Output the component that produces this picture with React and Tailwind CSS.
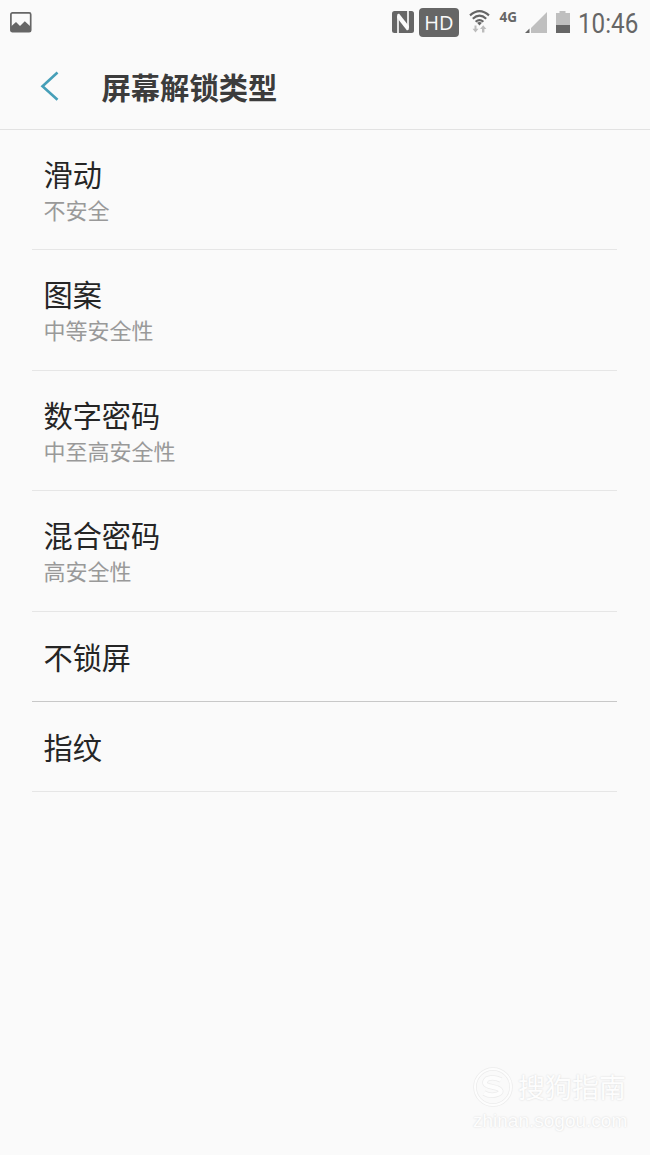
const lockTypes = [
  { title: '滑动', desc: '不安全' },
  { title: '图案', desc: '中等安全性' },
  { title: '数字密码', desc: '中至高安全性' },
  { title: '混合密码', desc: '高安全性' },
  { title: '不锁屏', strong: true },
  { title: '指纹' },
];

const StatusBar = () => (
  <div className="flex h-[46px] items-start justify-between pl-[10px] pr-[13px] text-[#666]">
    {/* Notification */}
    <svg className="mt-3 h-[21px] w-[22px]" viewBox="0 0 22 21" fill="none">
      <rect x="0.9" y="0.9" width="19.8" height="18.8" rx="1.5" stroke="currentColor" strokeWidth="1.7" />
      <path d="M1 14.500 6 10l4 4L14.800 9.200l6 5.500V20H1z" fill="currentColor" />
    </svg>

    <div className="flex items-start">
      {/* NFC */}
      <svg className="mt-[11px] h-[22px] w-[22px]" viewBox="0 0 22 22">
        <rect width="22" height="22" rx="2.5" fill="currentColor" />
        <path d="M6 22V5" stroke="#fafafa" strokeWidth="1.700" />
        <path d="M16 0V17" stroke="#fafafa" strokeWidth="1.700" />
        <path d="M5.200 3.500 7 2.500 16.800 15V18.500L15 19.500 5.200 7z" fill="#fafafa" />
      </svg>
      <span className="ml-[5px] mt-2 flex h-[29px] w-10 items-center justify-center rounded-[4px] bg-[#666] font-['Open_Sans',sans-serif] text-[20px] leading-none text-[#fafafa]">
        HD
      </span>
      {/* Wifi */}
      <svg className="ml-[10px] mt-[10px] h-[23px] w-[21px]" viewBox="0 0 21 23" fill="none">
        <g stroke="currentColor" strokeWidth="2.1">
          <path d="M1 5.400Q10.500-3 20 5.400" />
          <path d="M3.800 8.800Q10.500 2.600 17.200 8.800" />
          <path d="M6.600 11.800Q10.500 8.400 14.400 11.800" />
        </g>
        <path d="M8 12.800Q10.500 11 13 12.800L10.500 15.500z" fill="currentColor" />
        <path d="M5.500 15.500H7.500V18.800H9.500L6.500 22.500 3.500 18.800H5.500zM13 22.500V19H11L14.200 15.200 17.400 19H15.400V22.500z" fill="#bcbcbc" />
      </svg>
      <span className="ml-[9.5px] mt-[10px] w-[18.5px] font-['Open_Sans',sans-serif] text-[13.5px] font-bold leading-[14px]">
        4G
      </span>
      {/* Signal */}
      <svg className="ml-[7px] mt-[11px] h-[23px] w-[23px]" viewBox="0 0 23 23">
        <path d="M6 17 22 1V22H6z" fill="#bfbfbf" />
        <path d="M0 22 4.500 17.500V22z" fill="currentColor" />
      </svg>
      {/* Battery */}
      <svg className="ml-[7px] mt-[11px] h-[22px] w-[16px]" viewBox="0 0 16 22">
        <path d="M1 2H4.500V0H10.500V2H15V14H1z" fill="#bfbfbf" />
        <path d="M1 14H15V22H1z" fill="currentColor" />
      </svg>
      <span className="ml-[7px] mt-[9px] w-[59px] origin-left scale-x-[0.88] whitespace-nowrap font-[Roboto,sans-serif] text-[27.5px] leading-[30px]">
        10:46
      </span>
    </div>
  </div>
);

const Header = () => (
  <header className="flex h-[84px] items-center border-b border-[#e2e2e2] pl-10">
    <svg className="mb-[3px] h-[30px] w-[19px]" viewBox="0 0 19 30" fill="none">
      <path d="M17.500 1.500 2.500 15.200 17.500 28.800" stroke="#469fb8" strokeWidth="2.600" />
    </svg>
    <h1 className="ml-[42.5px] pb-1 text-[29.3px] font-bold leading-10 text-[#3c3c3c]">屏幕解锁类型</h1>
  </header>
);

const LockRow = ({ item }) => (
  <li
    className={`flex flex-col border-b pl-[11.5px] ${
      item.desc ? 'h-[120.4px] pt-[23px]' : 'h-[90.3px] pt-[24px]'
    } ${item.strong ? 'border-[#c8c8c8]' : 'border-[#e6e6e6]'}`}
  >
    <span className="text-[29.2px] leading-10 text-[#252525]">{item.title}</span>
    {item.desc && <span className="text-[22px] leading-8 text-[#999]">{item.desc}</span>}
  </li>
);

const Watermark = () => (
  <div className="absolute bottom-[22px] right-[22px] w-[155px] text-[#fdfdfd] [text-shadow:0_0_2px_#d6d6d6]">
    <div className="flex items-center">
      <svg className="h-10 w-10" viewBox="0 0 40 40" fill="none">
        <circle cx="20" cy="20" r="18" stroke="#ececec" strokeWidth="3.500" />
        <circle cx="20" cy="20" r="18" stroke="#fdfdfd" strokeWidth="2" />
        <path d="M28 13Q20 9 14 12Q9 17 16 19L24 21Q31 24 25 27Q18 30 11 26" stroke="#ececec" strokeWidth="5.500" />
        <path d="M28 13Q20 9 14 12Q9 17 16 19L24 21Q31 24 25 27Q18 30 11 26" stroke="#fdfdfd" strokeWidth="4" />
      </svg>
      <span className="ml-[5px] text-[27px] leading-10">搜狗指南</span>
    </div>
    <div className="mt-[2px] whitespace-nowrap font-['Liberation_Sans',sans-serif] text-[19px] leading-6">
      zhinan.sogou.com
    </div>
  </div>
);

export default function App() {
  return (
    <div className="relative h-[1155px] w-[650px] overflow-hidden bg-[#fafafa] font-['Noto_Sans_CJK_SC',sans-serif]">
      <StatusBar />
      <Header />
      <ul className="ml-8 mr-[33px]">
        {lockTypes.map((item) => (
          <LockRow key={item.title} item={item} />
        ))}
      </ul>
      <Watermark />
    </div>
  );
}
